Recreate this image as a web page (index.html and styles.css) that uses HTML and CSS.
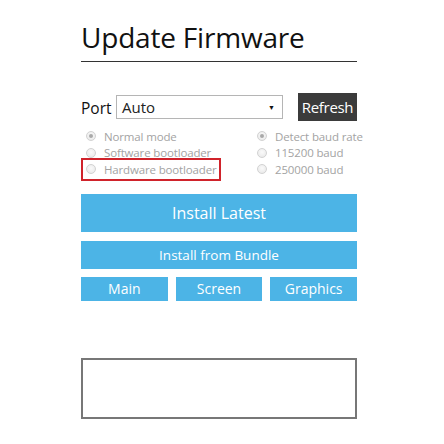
FILE: index.html
```html
<!DOCTYPE html>
<html>
<head>
<meta charset="utf-8">
<link rel="stylesheet" href="styles.css">
</head>
<body>
<div class="page">
  <h1 class="title">Update Firmware</h1>
  <div class="port-row">
    <span class="port-label">Port</span>
    <div class="select"><span class="select-value">Auto</span><span class="select-arrow">▼</span></div>
    <button class="refresh">Refresh</button>
  </div>
  <div class="options">
    <div class="opt"><span class="radio checked"></span><span class="opt-text">Normal mode</span></div>
    <div class="opt"><span class="radio checked"></span><span class="opt-text">Detect baud rate</span></div>
    <div class="opt"><span class="radio"></span><span class="opt-text">Software bootloader</span></div>
    <div class="opt"><span class="radio"></span><span class="opt-text">115200 baud</span></div>
    <div class="opt highlight"><span class="radio"></span><span class="opt-text">Hardware bootloader</span></div>
    <div class="opt"><span class="radio"></span><span class="opt-text">250000 baud</span></div>
  </div>
  <button class="btn btn-latest">Install Latest</button>
  <button class="btn btn-bundle">Install from Bundle</button>
  <div class="small-row">
    <button class="btn btn-small">Main</button>
    <button class="btn btn-small">Screen</button>
    <button class="btn btn-small">Graphics</button>
  </div>
  <div class="log"></div>
</div>
</body>
</html>
```
FILE: styles.css
```css
html, body {
  margin: 0;
  padding: 0;
  background: #ffffff;
}
body {
  font-family: "Open Sans", "Noto Sans", sans-serif;
  color: #111;
}
.page {
  width: 276px;
  margin-left: 81px;
}
.title {
  margin: 20px 0 0 0;
  font-size: 28px;
  line-height: 34px;
  font-weight: 400;
  letter-spacing: -0.2px;
  color: #111;
  padding-bottom: 7px;
  border-bottom: 1px solid #333;
}
.port-row {
  margin-top: 31px;
  height: 28px;
  display: flex;
  align-items: center;
}
.port-label {
  font-size: 15.5px;
  line-height: 20px;
  width: 35px;
  color: #111;
  position: relative;
  top: 1px;
}
.select {
  width: 167px;
  height: 24px;
  box-sizing: border-box;
  border: 1px solid #b5b5b5;
  display: flex;
  align-items: center;
  padding: 0 7px 0 5px;
}
.select-value {
  flex: 1;
  font-size: 15px;
  color: #222;
}
.select-arrow {
  font-size: 7px;
  color: #111;
}
.refresh {
  margin-left: auto;
  width: 59px;
  height: 28px;
  border: none;
  background: #3b3b3b;
  color: #fff;
  font-family: inherit;
  font-size: 15px;
  letter-spacing: -0.3px;
  padding: 0;
}
.options {
  margin-top: 7px;
  padding-left: 5px;
  display: grid;
  grid-template-columns: 171px 1fr;
}
.opt {
  display: flex;
  align-items: center;
  height: 16.5px;
  position: relative;
  justify-self: start;
}
.radio {
  width: 8px;
  height: 8px;
  border-radius: 50%;
  border: 1px solid #d2d2d2;
  background: radial-gradient(circle at 50% 40%, #fafafa, #e6e6e6);
  position: relative;
  flex: none;
}
.radio.checked::after {
  content: "";
  position: absolute;
  left: 2px;
  top: 2px;
  width: 4px;
  height: 4px;
  border-radius: 50%;
  background: #a9a9a9;
}
.opt-text {
  margin-left: 8px;
  font-size: 11.5px;
  letter-spacing: -0.15px;
  color: #a3a3a3;
  white-space: nowrap;
}
.highlight::after {
  content: "";
  position: absolute;
  left: -5px;
  top: -3px;
  right: -4px;
  bottom: -3px;
  border: 2px solid #d0232b;
}
.btn {
  display: block;
  width: 100%;
  border: none;
  background: #4cb4e6;
  color: #fff;
  font-family: inherit;
  padding: 0;
}
.btn-latest {
  margin-top: 16px;
  height: 38px;
  font-size: 16px;
}
.btn-bundle {
  margin-top: 9px;
  height: 28px;
  font-size: 13.5px;
}
.small-row {
  margin-top: 8px;
  display: grid;
  grid-template-columns: 1fr 1fr 1fr;
  gap: 8px;
}
.btn-small {
  height: 24px;
  font-size: 14px;
}
.log {
  margin-top: 57px;
  height: 61px;
  box-sizing: border-box;
  border: 2px solid #777;
}
```
